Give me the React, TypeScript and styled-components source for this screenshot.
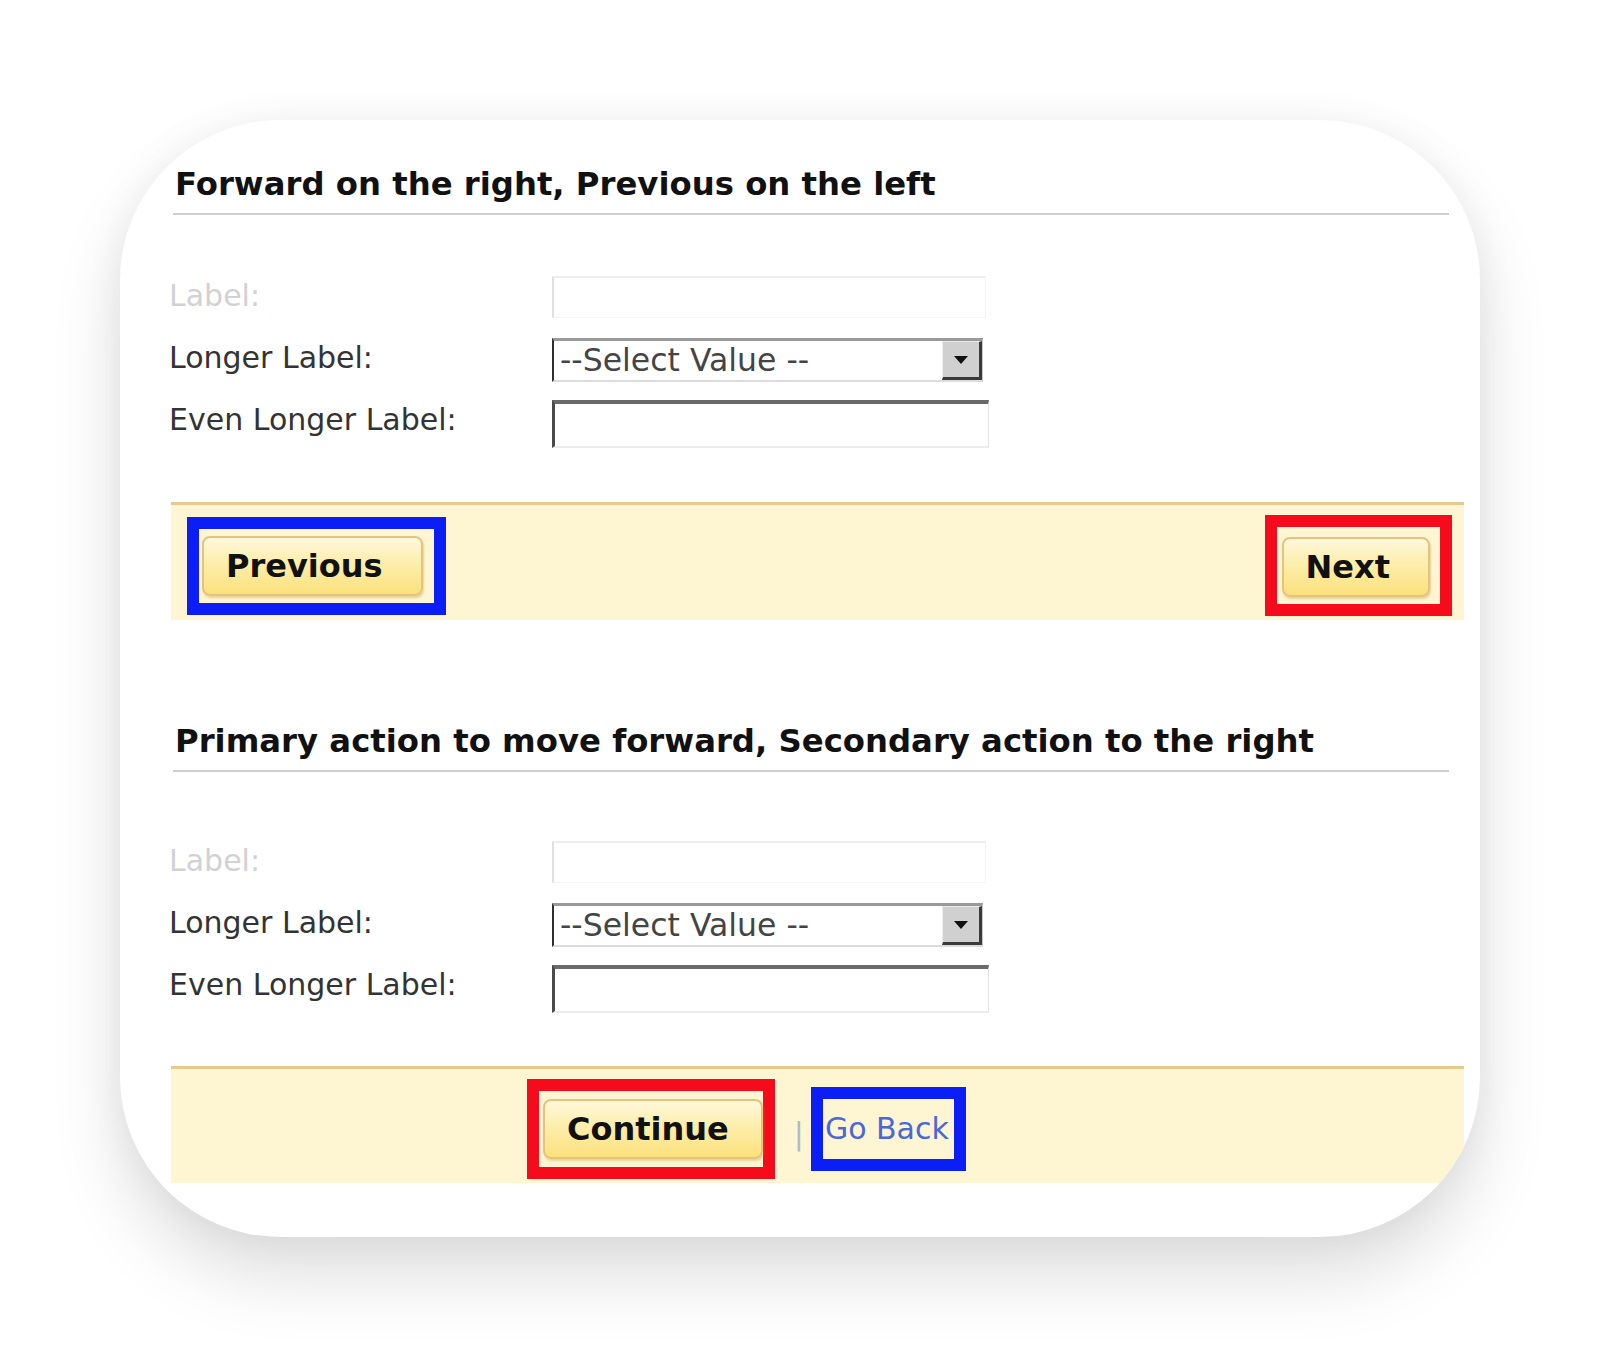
import React from 'react';
import styled, { createGlobalStyle } from 'styled-components';

const GlobalStyle = createGlobalStyle`
  html, body { margin: 0; padding: 0; background: #ffffff; }
  body { font-family: "DejaVu Sans", Verdana, sans-serif; }
  * { box-sizing: border-box; }
`;

const Page = styled.div`
  width: 1600px;
  height: 1356px;
  padding: 120px 0 0 120px;
  background: #ffffff;
  overflow: hidden;
`;

const Card = styled.div`
  width: 1360px;
  height: 1117px;
  border-radius: 160px;
  background: #ffffff;
  box-shadow: 0 40px 70px rgba(0, 0, 0, 0.13), 0 0 40px rgba(0, 0, 0, 0.05);
  padding: 45px 16px 0 49px;
  display: flex;
  flex-direction: column;
  overflow: hidden;
`;

const Section = styled.section<{ $top: number }>`
  display: flex;
  flex-direction: column;
  margin-top: ${(p) => p.$top}px;
`;

const Heading = styled.h2`
  margin: 0 15px 0 4px;
  padding: 0 0 10px 2px;
  font-family: "DejaVu Sans", Verdana, sans-serif;
  font-weight: bold;
  font-size: 32.3px;
  line-height: 38px;
  color: #111;
  border-bottom: 2px solid #cfcfcf;
`;

const Form = styled.div<{ $top: number }>`
  display: grid;
  grid-template-columns: 383px 440px;
  grid-auto-rows: 62px;
  align-items: center;
  margin-top: ${(p) => p.$top}px;
`;

const Label = styled.label<{ $disabled?: boolean }>`
  font-size: 30px;
  line-height: 36px;
  color: ${(p) => (p.$disabled ? '#d2d2d2' : '#333333')};
  margin-top: -2px;
`;

const TextField = styled.input<{ $disabled?: boolean }>`
  display: block;
  width: ${(p) => (p.$disabled ? 434 : 437)}px;
  height: ${(p) => (p.$disabled ? 42 : 48)}px;
  margin-top: ${(p) => (p.$disabled ? 0 : 6)}px;
  padding: 0 8px;
  font: 30px "DejaVu Sans", Verdana, sans-serif;
  background: #ffffff;
  outline: none;
  border-style: solid;
  border-color: ${(p) =>
    p.$disabled ? '#eeeeee #f4f4f4 #f4f4f4 #e0e0e0' : '#6a6a6a #e4e4e4 #ececec #4a4a4a'};
  border-width: ${(p) => (p.$disabled ? '2px 1px 1px 2px' : '4px 1px 2px 3px')};
`;

const SelectBox = styled.div`
  display: flex;
  align-items: stretch;
  width: 431px;
  height: 44px;
  margin-top: 2px;
  border-style: solid;
  border-width: 3px 1px 2px 2px;
  border-color: #9a9a9a #c8c8c8 #dcdcdc #2e2e2e;
  background: #ffffff;
`;

const SelectText = styled.span`
  flex: 1;
  padding-left: 6px;
  font-size: 31.5px;
  line-height: 38px;
  color: #444444;
  white-space: pre;
`;

const ArrowButton = styled.span`
  width: 40px;
  display: flex;
  align-items: center;
  justify-content: center;
  background: #d0d0d0;
  border-style: solid;
  border-width: 1px 3px 3px 1px;
  border-color: #e8e8e8 #3a3a3a #3a3a3a #eeeeee;
`;

const ActionBar = styled.div<{ $justify: string; $padLeft: number }>`
  display: flex;
  align-items: center;
  justify-content: ${(p) => p.$justify};
  margin: 0 0 0 2px;
  padding: 10px 12px 4px ${(p) => p.$padLeft}px;
  background: #fef5d2;
  border-top: 3px solid #e8c98e;
`;

const Highlight = styled.div<{ $color: string; $pad: string }>`
  display: flex;
  align-items: center;
  border: 12px solid ${(p) => p.$color};
  padding: ${(p) => p.$pad};
`;

const YellowButton = styled.button<{ $tight?: boolean }>`
  height: 60px;
  padding: 0 ${(p) => (p.$tight ? 32 : 38)}px 0 22px;
  font-family: "DejaVu Sans", Verdana, sans-serif;
  font-weight: bold;
  font-size: 32px;
  color: #111111;
  background: linear-gradient(#fff8dc 0%, #fdefb0 40%, #fbe17c 100%);
  border: 2px solid #e4c47c;
  border-radius: 8px;
  box-shadow: 1px 2px 2px rgba(190, 150, 60, 0.35);
  cursor: pointer;
`;

const Separator = styled.span`
  font-size: 30px;
  line-height: 36px;
  color: #b4b9c6;
  margin: 10px 7px 0 19px;
`;

const LinkText = styled.a`
  font-size: 30px;
  line-height: 56px;
  color: #4a68d8;
  text-decoration: none;
  cursor: pointer;
`;

const BLUE = '#0c1ef6';
const RED = '#f60b1d';

const Arrow = () => (
  <svg width="16" height="10" viewBox="0 0 16 10">
    <path d="M1 1 L15 1 L8 9 Z" fill="#111" />
  </svg>
);

const Fields: React.FC<{ top: number }> = ({ top }) => (
  <Form $top={top}>
    <Label $disabled>Label:</Label>
    <TextField $disabled disabled readOnly />
    <Label>Longer Label:</Label>
    <SelectBox>
      <SelectText>--Select Value --</SelectText>
      <ArrowButton>
        <Arrow />
      </ArrowButton>
    </SelectBox>
    <Label>Even Longer Label:</Label>
    <TextField readOnly />
  </Form>
);

export default function App() {
  return (
    <Page>
      <GlobalStyle />
      <Card>
        <Section $top={0}>
          <Heading>Forward on the right, Previous on the left</Heading>
          <Fields top={51} />
          <ActionBar $justify="space-between" $padLeft={16} style={{ marginTop: 50 }}>
            <Highlight $color={BLUE} $pad="7px 11px 7px 3px">
              <YellowButton>Previous</YellowButton>
            </Highlight>
            <Highlight $color={RED} $pad="10px 10px 7px 5px">
              <YellowButton>Next</YellowButton>
            </Highlight>
          </ActionBar>
        </Section>
        <Section $top={102}>
          <Heading>Primary action to move forward, Secondary action to the right</Heading>
          <Fields top={59} />
          <ActionBar $justify="flex-start" $padLeft={356} style={{ marginTop: 49 }}>
            <Highlight $color={RED} $pad="8px 0 8px 4px">
              <YellowButton $tight>Continue</YellowButton>
            </Highlight>
            <Separator>|</Separator>
            <Highlight $color={BLUE} $pad="2px 5px 2px 2px">
              <LinkText>Go Back</LinkText>
            </Highlight>
          </ActionBar>
        </Section>
      </Card>
    </Page>
  );
}
